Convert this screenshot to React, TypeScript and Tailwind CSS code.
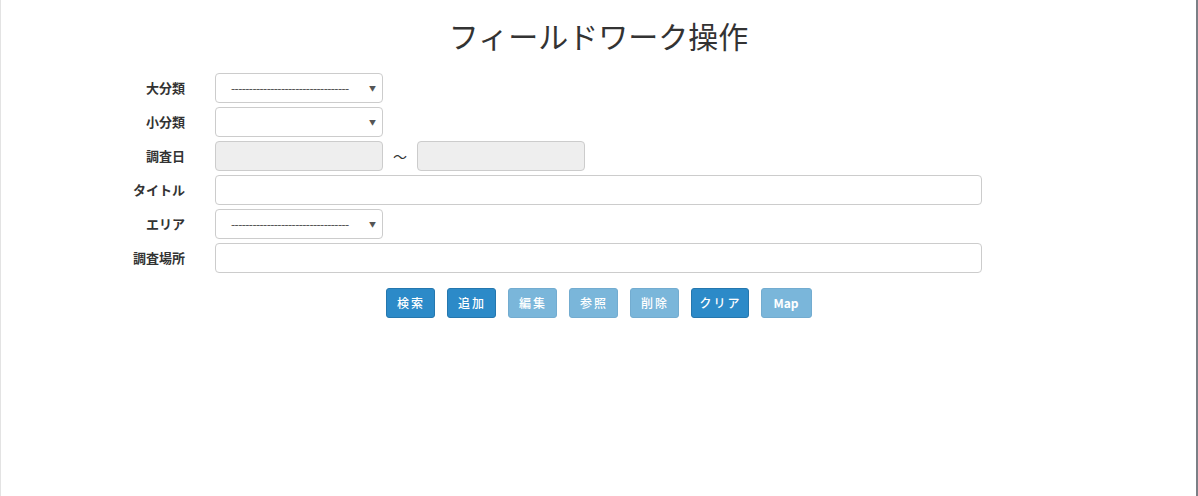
import React from 'react';

const font = { fontFamily: '"Noto Sans CJK JP", "Liberation Sans", sans-serif' };

const Label = ({ children }: { children: React.ReactNode }) => (
  <div className="w-[184px] shrink-0 text-right text-[13px] font-bold text-[#333] leading-[30px]">
    {children}
  </div>
);

const Select = ({ dashes }: { dashes?: boolean }) => (
  <div className="relative w-[168px] h-[30px] rounded-[4px] border border-[#ccc] bg-white">
    {dashes && (
      <span className="absolute left-[15px] top-[6px] text-[12px] leading-[16px] text-[#444] tracking-[-0.6px]">
        ---------------------------------
      </span>
    )}
    <span className="absolute right-[6px] top-[7px] text-[7px] leading-[14px] text-[#555]">▼</span>
  </div>
);

const Btn = ({ label, disabled, w, en }: { label: string; disabled?: boolean; w: string; en?: boolean }) => (
  <button
    className={`h-[30px] ${w} rounded-[3px] border text-[12px] text-white ${en ? 'font-bold' : 'font-medium tracking-[2px] pl-[2px]'} ${
      disabled ? 'bg-[#7ab6da] border-[#73acd0]' : 'bg-[#2c8ac8] border-[#2577ae]'
    }`}
  >
    {label}
  </button>
);

export default function App() {
  return (
    <div className="w-full h-[496px] bg-white border-l border-[#e3e3e3] border-r-2 border-r-[#7b7f86]" style={font}>
      <h1 className="pt-[14px] text-center text-[30px] leading-[42px] text-[#333] font-normal">フィールドワーク操作</h1>
      <div className="mt-[17px] flex flex-col gap-[4px]">
        <div className="flex gap-[30px]">
          <Label>大分類</Label>
          <Select dashes />
        </div>
        <div className="flex gap-[30px]">
          <Label>小分類</Label>
          <Select />
        </div>
        <div className="flex gap-[30px]">
          <Label>調査日</Label>
          <div className="flex items-center">
            <div className="w-[168px] h-[30px] rounded-[4px] border border-[#ccc] bg-[#eee]" />
            <span className="w-[34px] text-center text-[14px] text-[#333]">～</span>
            <div className="w-[168px] h-[30px] rounded-[4px] border border-[#ccc] bg-[#eee]" />
          </div>
        </div>
        <div className="flex gap-[30px]">
          <Label>タイトル</Label>
          <div className="w-[767px] h-[30px] rounded-[4px] border border-[#ccc] bg-white" />
        </div>
        <div className="flex gap-[30px]">
          <Label>エリア</Label>
          <Select dashes />
        </div>
        <div className="flex gap-[30px]">
          <Label>調査場所</Label>
          <div className="w-[767px] h-[30px] rounded-[4px] border border-[#ccc] bg-white" />
        </div>
      </div>
      <div className="mt-[15px] flex justify-center gap-[12px]">
        <Btn label="検索" w="w-[49px]" />
        <Btn label="追加" w="w-[49px]" />
        <Btn label="編集" w="w-[49px]" disabled />
        <Btn label="参照" w="w-[49px]" disabled />
        <Btn label="削除" w="w-[49px]" disabled />
        <Btn label="クリア" w="w-[58px]" />
        <Btn label="Map" w="w-[51px]" disabled en />
      </div>
    </div>
  );
}
